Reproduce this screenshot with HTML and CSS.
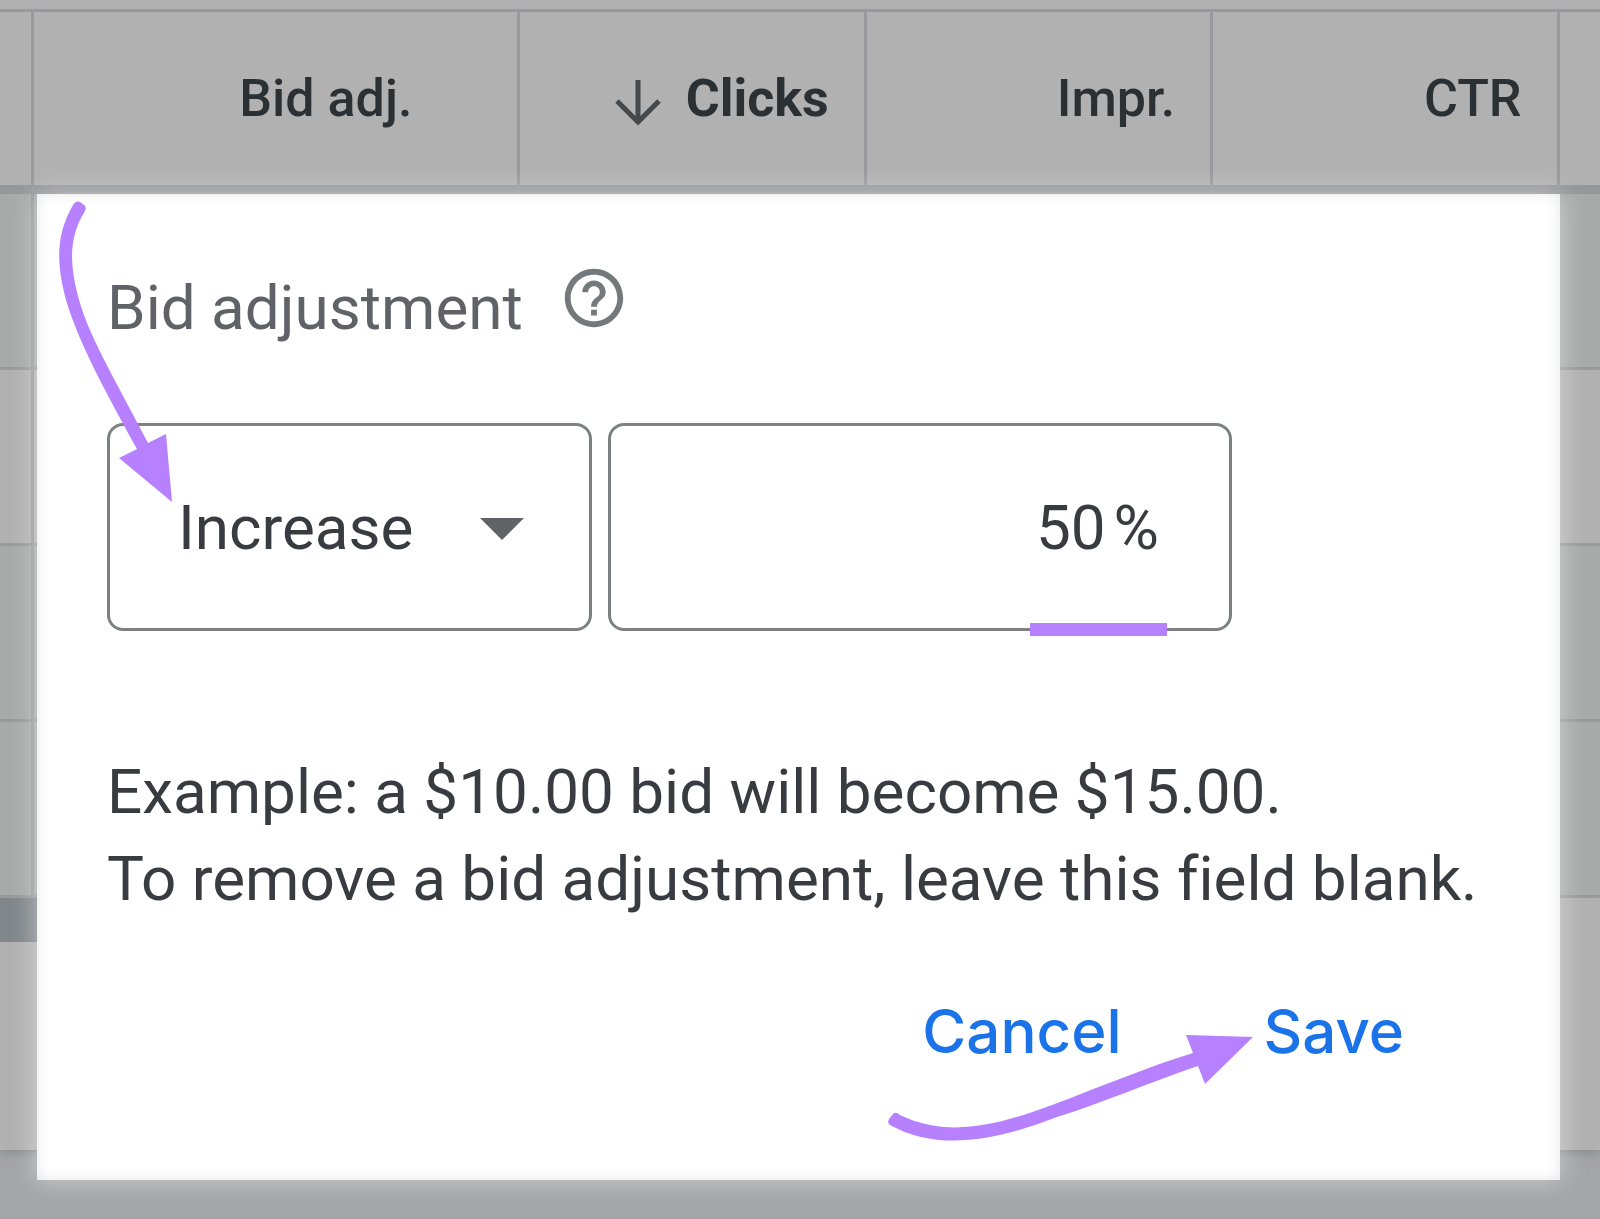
FILE: index.html
```
<!DOCTYPE html>
<html lang="en">
<head>
  <meta charset="UTF-8">
  <meta name="viewport" content="width=device-width, initial-scale=1.0">
  <title>Bid adjustment</title>
  <link rel="stylesheet" href="styles.css">
</head>
<body>
  <table class="report">
    <colgroup>
      <col class="col-edge">
      <col class="col-bid">
      <col class="col-metric">
      <col class="col-metric">
      <col class="col-metric">
      <col>
    </colgroup>
    <thead>
      <tr>
        <th></th>
        <th class="bid">Bid adj.</th>
        <th class="sorted">
          <svg class="sort-icon" viewBox="0 0 46 48" aria-hidden="true"><path d="M23 1v41M2 22l21 21 21-21"/></svg>Clicks
        </th>
        <th>Impr.</th>
        <th>CTR</th>
        <th></th>
      </tr>
    </thead>
    <tbody>
      <tr class="shaded"><td></td><td></td><td></td><td></td><td></td><td></td></tr>
      <tr><td></td><td></td><td></td><td></td><td></td><td></td></tr>
      <tr class="shaded"><td></td><td></td><td></td><td></td><td></td><td></td></tr>
      <tr class="shaded"><td></td><td></td><td></td><td></td><td></td><td></td></tr>
      <tr class="band"><td colspan="5"></td><td></td></tr>
      <tr class="total"><td colspan="6"></td></tr>
    </tbody>
  </table>

  <form class="popup">
    <div class="popup-title">
      <label for="amount">Bid adjustment</label>
      <svg class="help-icon" viewBox="0 0 24 24" aria-hidden="true"><path d="M11 18h2v-2h-2v2zm1-16C6.480 2 2 6.480 2 12s4.480 10 10 10 10-4.480 10-10S17.520 2 12 2zm0 18c-4.410 0-8-3.590-8-8s3.590-8 8-8 8 3.590 8 8-3.590 8-8 8zm0-14c-2.210 0-4 1.790-4 4h2c0-1.100.900-2 2-2s2 .900 2 2c0 2-3 1.750-3 5h2c0-2.250 3-2.500 3-5 0-2.210-1.790-4-4-4z"/></svg>
    </div>

    <div class="fields">
      <div class="field direction">
        <select aria-label="Direction">
          <option>Increase</option>
          <option>Decrease</option>
        </select>
        <svg class="caret" viewBox="0 0 44 22" aria-hidden="true"><path d="M0 0h44L22 22z"/></svg>
      </div>
      <div class="field amount">
        <input type="text" id="amount" value="50">
        <span>%</span>
        <div class="underline"></div>
      </div>
    </div>

    <p class="example">Example: a $10.00 bid will become $15.00.<br>To remove a bid adjustment, leave this field blank.</p>

    <div class="actions">
      <button type="button">Cancel</button>
      <button type="submit">Save</button>
      <svg class="arrow-save" viewBox="886 1030 370 114" aria-hidden="true">
        <path d="M889 1119L893 1114Q896 1111 900 1115C950 1139 1000 1124 1052 1105C1100 1087 1150 1066 1193 1053L1186 1035L1253 1037L1205 1084L1198 1066C1150 1082 1100 1104 1057 1117C1000 1139 940 1153 890 1125Q887 1123 889 1119Z"/>
      </svg>
    </div>

    <svg class="arrow-field" viewBox="57 199 118 306" aria-hidden="true">
      <path d="M73 205Q76 200 80 202L84 205Q87 207 85 211C68 238 70 266 78 296C87 332 112 374 148 443L166 434L172 502L119 458L137 449C100 382 78 340 66 300C56 262 56 235 73 205Z"/>
    </svg>
  </form>
</body>
</html>
```
FILE: styles.css
```
* {
  box-sizing: border-box;
}

body {
  margin: 0;
  padding-top: 9px;
  min-height: 100vh;
  position: relative;
  overflow: hidden;
  font-family: Roboto, Arial, sans-serif;
  color: #383c40;
  background: #a3a5a6;
}

/* dimmed report behind the popup */
.report {
  width: 100%;
  table-layout: fixed;
  border-collapse: separate;
  border-spacing: 0;
  background: #b1b1b1;
  border-top: 3px solid #98999c;
  box-shadow: 0 -20px 0 #b1b1b1, 0 0 12px #757b7d;
}

.col-edge {
  width: 34px;
}

.col-bid {
  width: 30.4%;
}

.col-metric {
  width: 21.65%;
}

.report th {
  height: 182px;
  padding: 0 35px 0 0;
  border-right: 3px solid #98999c;
  border-bottom: 9px solid #95969a;
  font-size: 52px;
  font-weight: 500;
  text-align: right;
  white-space: nowrap;
  color: #2a3033;
}

.report th.bid {
  padding-right: 105px;
}

.report th.sorted {
  font-weight: 700;
}

.report th:last-child,
.report td:last-child {
  border-right: 0;
}

.sort-icon {
  width: 46px;
  height: 48px;
  margin-right: 25px;
  vertical-align: -11px;
  fill: none;
  stroke: #45494c;
  stroke-width: 5px;
}

.report td {
  height: 176px;
  padding: 0;
  border-right: 3px solid #98999c;
  border-bottom: 3px solid #98999c;
}

.report .shaded td {
  background: #a8aaa9;
}

.report .band td {
  height: 44px;
  border: 0;
}

.report .band td:first-child {
  background: #80868a;
}

.report .total td {
  height: 208px;
  border: 0;
}

/* popup */
.popup {
  position: absolute;
  top: 194px;
  left: 37px;
  right: 40px;
  padding: 69px 70px 109px;
  background: #fff;
  box-shadow: 0 0 26px rgba(255, 255, 255, 0.5), inset 0 0 14px rgba(0, 0, 0, 0.1);
  font-size: 62px;
  font-variant-ligatures: none;
}

.popup-title {
  display: flex;
  align-items: flex-start;
  gap: 36px;
  margin-bottom: 70px;
  line-height: 90px;
  color: #5f6368;
}

.help-icon {
  width: 70px;
  height: 70px;
  fill: #74797c;
}

.fields {
  display: flex;
  gap: 16px;
}

.field {
  display: flex;
  align-items: center;
  position: relative;
  height: 208px;
  border: 3px solid #7d8183;
  border-radius: 16px;
}

.direction {
  width: 485px;
}

.amount {
  width: 624px;
  padding: 0 70px;
  gap: 8px;
}

.field select,
.field input {
  width: 100%;
  height: 100%;
  border: 0;
  outline: 0;
  background: transparent;
  color: inherit;
  font: inherit;
}

.field select {
  appearance: none;
  padding: 0 68px;
}

.field input {
  flex: 1;
  min-width: 0;
  padding: 0;
  text-align: right;
}

.caret {
  position: absolute;
  top: 92px;
  right: 65px;
  width: 44px;
  height: 22px;
  fill: #5f6368;
  pointer-events: none;
}

.underline {
  position: absolute;
  right: 62px;
  bottom: -8px;
  width: 137px;
  height: 13px;
  background: #b780ff;
}

.example {
  margin: 117px 0 69px;
  line-height: 87px;
  white-space: nowrap;
}

.actions {
  display: flex;
  justify-content: flex-end;
  position: relative;
  gap: 142px;
  padding-right: 86px;
}

.actions button {
  padding: 0;
  border: 0;
  background: none;
  font: 500 60px/80px Inter, sans-serif;
  color: #1a73e8;
  cursor: pointer;
}

.arrow-field,
.arrow-save {
  position: absolute;
  fill: #b780ff;
  pointer-events: none;
}

.arrow-field {
  top: 5px;
  left: 20px;
  width: 118px;
  height: 306px;
}

.arrow-save {
  top: 39px;
  right: 234px;
  width: 370px;
  height: 114px;
}
```
